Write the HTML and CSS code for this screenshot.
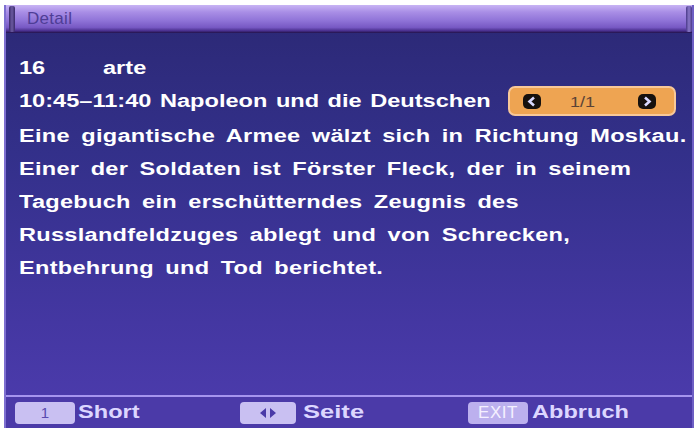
FILE: index.html
```html
<!DOCTYPE html>
<html lang="de">
<head>
<meta charset="utf-8">
<title>Detail</title>
<link rel="stylesheet" href="styles.css">
</head>
<body>
<div class="screen">
  <div class="titlebar">
    <span class="cap"></span>
    <span class="title">Detail</span>
    <span class="cap cap-right"></span>
  </div>
  <div class="content">
    <div class="row channel"><span class="num"><span class="sx">16</span></span><span class="name"><span class="sx">arte</span></span></div>
    <div class="row event">
      <span class="evtitle"><span class="sx">10:45–11:40 Napoleon und die Deutschen</span></span>
      <span class="pager">
        <span class="arrow"><svg viewBox="0 0 18 15" width="18" height="15"><path d="M11 3.5 L6.5 7.5 L11 11.5" fill="none" stroke="#d8d8ff" stroke-width="2.6"/></svg></span>
        <span class="pagenum"><span class="sx">1/1</span></span>
        <span class="arrow"><svg viewBox="0 0 18 15" width="18" height="15"><path d="M7 3.5 L11.5 7.5 L7 11.5" fill="none" stroke="#d8d8ff" stroke-width="2.6"/></svg></span>
      </span>
    </div>
    <p class="desc">Eine gigantische Armee wälzt sich in Richtung Moskau.<br>Einer der Soldaten ist Förster Fleck, der in seinem<br>Tagebuch ein erschütterndes Zeugnis des<br>Russlandfeldzuges ablegt und von Schrecken,<br>Entbehrung und Tod berichtet.</p>
  </div>
  <div class="footer">
    <div class="hint hint-1"><span class="key key-1">1</span><span class="label"><span class="sx">Short</span></span></div>
    <div class="hint hint-2"><span class="key key-lr"><svg viewBox="0 0 24 12" width="24" height="12"><path d="M10 1 L4 6 L10 11 Z M14 1 L20 6 L14 11 Z" fill="#4a3aa8"/></svg></span><span class="label"><span class="sx">Seite</span></span></div>
    <div class="hint hint-3"><span class="key key-exit">EXIT</span><span class="label"><span class="sx">Abbruch</span></span></div>
  </div>
</div>
</body>
</html>
```
FILE: styles.css
```css
html, body {
  margin: 0;
  padding: 0;
  background: #ffffff;
}
body {
  width: 698px;
  height: 432px;
  overflow: hidden;
  font-family: "Liberation Sans", Arial, sans-serif;
}
.screen {
  margin: 5px 4px 4px 4px;
  height: 423px;
  display: flex;
  flex-direction: column;
  overflow: hidden;
  background: linear-gradient(180deg, #2b2874 0%, #33308a 35%, #4437a2 75%, #4d3cae 100%);
  border-left: 2px solid #7d6fd0;
  border-right: 2px solid #6e5fc4;
  box-sizing: border-box;
}
.sx {
  display: inline-block;
  white-space: nowrap;
  transform: scaleX(1.31);
  transform-origin: 0 50%;
}
.titlebar {
  height: 28px;
  flex: none;
  display: flex;
  align-items: center;
  background: linear-gradient(180deg, #c8b4f4 0%, #a98ee6 25%, #9074d8 55%, #7759c4 80%, #4a2f8e 92%, #22124a 100%);
}
.cap {
  width: 6px;
  height: 26px;
  margin-left: 3px;
  background: linear-gradient(90deg, #3a2a6a, #6b5aa0 50%, #3a2a6a);
  border-radius: 2px;
}
.cap-right {
  margin-left: auto;
  margin-right: 0;
  background: linear-gradient(90deg, #4a3a8a, #8a78c8 50%, #4a3a8a);
}
.title {
  margin-left: 12px;
  font-size: 17px;
  color: #4e3d96;
  letter-spacing: 0.3px;
}
.content {
  flex: 1;
  min-height: 0;
  padding: 23px 0 0 13px;
  color: #ffffff;
  font-weight: bold;
  font-size: 18px;
}
.row {
  display: flex;
  align-items: center;
}
.channel {
  height: 24px;
}
.num {
  width: 84px;
}
.event {
  margin-top: 5px;
  height: 32px;
}
.evtitle {
  width: 474px;
  word-spacing: 1.5px;
}
.pager {
  margin-left: 15px;
  width: 168px;
  height: 30px;
  box-sizing: border-box;
  border: 2px solid #f8c898;
  border-radius: 7px;
  background: #eea452;
  display: flex;
  align-items: center;
  padding: 0 0 0 13px;
}
.arrow {
  width: 18px;
  height: 15px;
  background: #16110e;
  border-radius: 5px;
  display: flex;
  flex: none;
}
.pagenum {
  width: 97px;
  text-align: center;
  font-weight: normal;
  font-size: 15px;
  color: #5a4236;
  padding-right: 14px;
  box-sizing: border-box;
}
.pagenum .sx {
  transform: scaleX(1.2);
  transform-origin: 50% 50%;
}
.desc {
  margin: 3px 0 0 0;
  width: 520px;
  line-height: 33px;
  white-space: nowrap;
  word-spacing: 3.5px;
  letter-spacing: 0.2px;
  transform: scaleX(1.31);
  transform-origin: 0 0;
}
.footer {
  flex: none;
  height: 31px;
  border-top: 2px solid #a595ee;
  background: #4b3aa8;
  display: flex;
  align-items: center;
  padding-left: 9px;
}
.hint {
  display: flex;
  align-items: center;
}
.hint-1 { width: 225px; }
.hint-2 { width: 228px; }
.key {
  height: 22px;
  box-sizing: border-box;
  border-radius: 4px;
  background: #c9c0f2;
  color: #5a4ab0;
  display: flex;
  align-items: center;
  justify-content: center;
  font-size: 15px;
  flex: none;
}
.key-1 { width: 60px; }
.key-lr { width: 56px; }
.key-exit { width: 60px; font-size: 17px; letter-spacing: 0.5px; color: #f4f0ff; background: #bcb0ee; }
.label {
  color: #dcd6ff;
  font-weight: bold;
  font-size: 18px;
}
.hint-1 .label { margin-left: 3px; }
.hint-2 .label { margin-left: 7px; }
.hint-2 .label .sx { transform: scaleX(1.42); }
.hint-3 .label { margin-left: 4px; }
```
